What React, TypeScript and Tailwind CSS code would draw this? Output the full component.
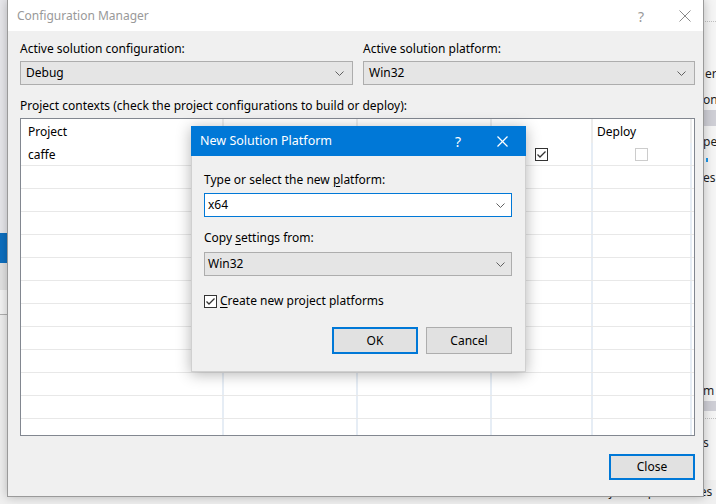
import React from "react";

const font = { fontFamily: '"Noto Sans", "Open Sans", sans-serif' };

function Chevron({ color = "#606060" }: { color?: string }) {
  return (
    <svg width="9" height="5" viewBox="0 0 9 5" className="shrink-0">
      <polyline points="0.5,0.5 4.5,4.5 8.5,0.5" fill="none" stroke={color} strokeWidth="1" />
    </svg>
  );
}

function Check({ color = "#333" }: { color?: string }) {
  return (
    <svg width="11" height="11" viewBox="0 0 11 11">
      <polyline points="1.5,5.5 4,8 9.5,2.5" fill="none" stroke={color} strokeWidth="1.3" />
    </svg>
  );
}

function XIcon({ size, color, w = 1 }: { size: number; color: string; w?: number }) {
  return (
    <svg width={size} height={size} viewBox={`0 0 ${size} ${size}`}>
      <line x1="0.5" y1="0.5" x2={size - 0.5} y2={size - 0.5} stroke={color} strokeWidth={w} />
      <line x1={size - 0.5} y1="0.5" x2="0.5" y2={size - 0.5} stroke={color} strokeWidth={w} />
    </svg>
  );
}

function Select({ value }: { value: string }) {
  return (
    <div className="h-[24px] flex items-center justify-between bg-[#e5e5e5] border border-[#adadad] pl-[5px] pr-[8px] text-[12px] text-black">
      <span>{value}</span>
      <Chevron />
    </div>
  );
}

const rowCount = 13;

export default function App() {
  return (
    <div className="relative w-[716px] h-[504px] overflow-hidden bg-[#f0f0f0]" style={font}>
      {/* background IDE peeking: left strip */}
      <div className="absolute left-0 top-0 w-[8px] h-[504px] flex flex-col">
        <div className="h-[233px] bg-[#e8e8ec]" />
        <div className="h-[30px] bg-[#0e70c0]" />
        <div className="h-[27px] bg-[#e3e3e3]" />
        <div className="h-[25px] bg-[#f5f5f5] border-b border-[#b0b0b0]" />
        <div className="flex-1 bg-[#f0f0f0]" />
      </div>
      {/* right strip */}
      <div className="absolute left-[703px] top-0 w-[13px] h-[480px] flex flex-col bg-[#f5f5f5] text-[12px] text-[#1e1e1e] leading-[16px] overflow-hidden">
        <div className="h-[22px] border-b border-dotted border-[#c0c0c0]" />
        <div className="h-[44px]" />
        <div className="h-[16px] pl-[2px]">er</div>
        <div className="h-[10px]" />
        <div className="h-[18px] pl-[0px]">on</div>
        <div className="h-[16px] bg-[#cfcfd6]" />
        <div className="h-[8px]" />
        <div className="h-[18px]">pe</div>
        <div className="h-[18px] pl-[3px] pt-[6px]"><div className="w-[2px] h-[4px] bg-[#1c97ea]" /></div>
        <div className="h-[18px]">es</div>
        <div className="h-[195px]" />
        <div className="h-[18px]">m</div>
        <div className="h-[10px] bg-[#cfcfd6]" />
        <div className="h-[8px] border-b border-dotted border-[#c0c0c0]" />
        <div className="h-[16px]" />
        <div className="h-[18px]">s</div>
      </div>
      {/* bottom strip text (behind the window) */}
      <div className="absolute left-[590px] top-[484px] text-[12px] text-[#1e1e1e] leading-[16px] whitespace-nowrap">Project Dependencies</div>

      {/* Main window */}
      <div className="absolute left-[7px] top-0 w-[697px] h-[497px] flex flex-col bg-[#f0f0f0] border-x border-b border-[#9a9a9a] shadow-[0_0_10px_rgba(0,0,0,0.25)]">
        <div className="h-[31px] bg-white flex items-center pl-[9px] pr-[12px] pt-[1px] shrink-0">
          <span className="text-[12px] text-[#999999] flex-1">Configuration Manager</span>
          <span className="text-[14px] text-[#999999] mr-[35px]">?</span>
          <XIcon size={12} color="#8a8a8a" />
        </div>
        <div className="flex-1 flex flex-col pl-[12px] pr-[8px] pt-[9px] text-[12px] text-black">
          <div className="flex gap-[10px]">
            <div className="w-[333px] flex flex-col">
              <div className="leading-[18px]">Active solution configuration:</div>
              <div className="mt-[3px]"><Select value="Debug" /></div>
            </div>
            <div className="flex-1 flex flex-col">
              <div className="leading-[18px]">Active solution platform:</div>
              <div className="mt-[3px]"><Select value="Win32" /></div>
            </div>
          </div>
          <div className="leading-[18px] mt-[12px]">Project contexts (check the project configurations to build or deploy):</div>
          <div className="mt-[3px] h-[318px] border border-[#828790] bg-white overflow-hidden flex flex-col">
            {/* header */}
            <div className="h-[24px] flex shrink-0">
              <div className="w-[203px] border-r-2 border-[#ececec] pl-[7px] pt-[1px] leading-[24px]">Project</div>
              <div className="w-[134px] border-r-2 border-[#ececec]" />
              <div className="w-[134px] border-r-2 border-[#ececec]" />
              <div className="w-[101px] border-r-2 border-[#ececec]" />
              <div className="w-[99px] border-r-2 border-[#ececec] pl-[4px] pt-[1px] leading-[24px]">Deploy</div>
              <div className="flex-1" />
            </div>
            {Array.from({ length: rowCount }).map((_, i) => (
              <div key={i} className="h-[23px] flex shrink-0 border-b border-[#e8e8e8]">
                <div className="w-[203px] border-r-2 border-[#e6edf5] pl-[7px] pt-[1px] leading-[22px]">{i === 0 ? "caffe" : ""}</div>
                <div className="w-[134px] border-r-2 border-[#e6edf5]" />
                <div className="w-[134px] border-r-2 border-[#e6edf5]" />
                <div className="w-[101px] border-r-2 border-[#e6edf5] flex items-center justify-center">
                  {i === 0 && (
                    <div className="w-[13px] h-[13px] border border-[#333333] bg-white flex items-center justify-center">
                      <Check />
                    </div>
                  )}
                </div>
                <div className="w-[99px] border-r-2 border-[#e6edf5] flex items-center justify-center">
                  {i === 0 && <div className="w-[13px] h-[13px] border border-[#cccccc] bg-white" />}
                </div>
                <div className="flex-1" />
              </div>
            ))}
          </div>
          <div className="flex justify-end mt-[18px]">
            <div className="w-[86px] h-[26px] border-2 border-[#0078d7] bg-[#e1e1e1] flex items-center justify-center">Close</div>
          </div>
        </div>
      </div>

      {/* Dialog */}
      <div className="absolute left-[191px] top-[126px] w-[335px] h-[246px] flex flex-col bg-[#f0f0f0] border border-[#d0d0d0] shadow-[0_2px_14px_rgba(0,0,0,0.3)] text-[12px] text-black">
        <div className="h-[30px] bg-[#0078d7] flex items-center pl-[9px] pr-[18px] shrink-0 -mx-px -mt-px">
          <span className="text-[12.5px] text-white flex-1">New Solution Platform</span>
          <span className="text-[14px] text-white mr-[36px]">?</span>
          <XIcon size={11} color="#ffffff" w={1.2} />
        </div>
        <div className="flex flex-col pl-[12px] pr-[13px] pt-[15px]">
          <div className="leading-[18px]">
            Type or select the new <span className="underline underline-offset-2">p</span>latform:
          </div>
          <div className="mt-[4px] h-[24px] flex items-center justify-between bg-white border border-[#0078d7] pl-[3px] pr-[6px]">
            <span>x64</span>
            <Chevron />
          </div>
          <div className="leading-[18px] mt-[12px]">
            Copy <span className="underline underline-offset-2">s</span>ettings from:
          </div>
          <div className="mt-[5px] h-[24px] flex items-center justify-between bg-[#e5e5e5] border border-[#adadad] pl-[3px] pr-[6px]">
            <span>Win32</span>
            <Chevron />
          </div>
          <div className="mt-[16px] h-[18px] flex items-center">
            <div className="w-[13px] h-[13px] border border-[#333333] bg-white flex items-center justify-center">
              <Check />
            </div>
            <span className="ml-[3px]">
              <span className="underline underline-offset-2">C</span>reate new project platforms
            </span>
          </div>
          <div className="mt-[17px] flex justify-end gap-[8px]">
            <div className="w-[86px] h-[27px] border-2 border-[#0078d7] bg-[#e1e1e1] flex items-center justify-center">OK</div>
            <div className="w-[86px] h-[27px] border border-[#adadad] bg-[#e1e1e1] flex items-center justify-center">Cancel</div>
          </div>
        </div>
      </div>
    </div>
  );
}
